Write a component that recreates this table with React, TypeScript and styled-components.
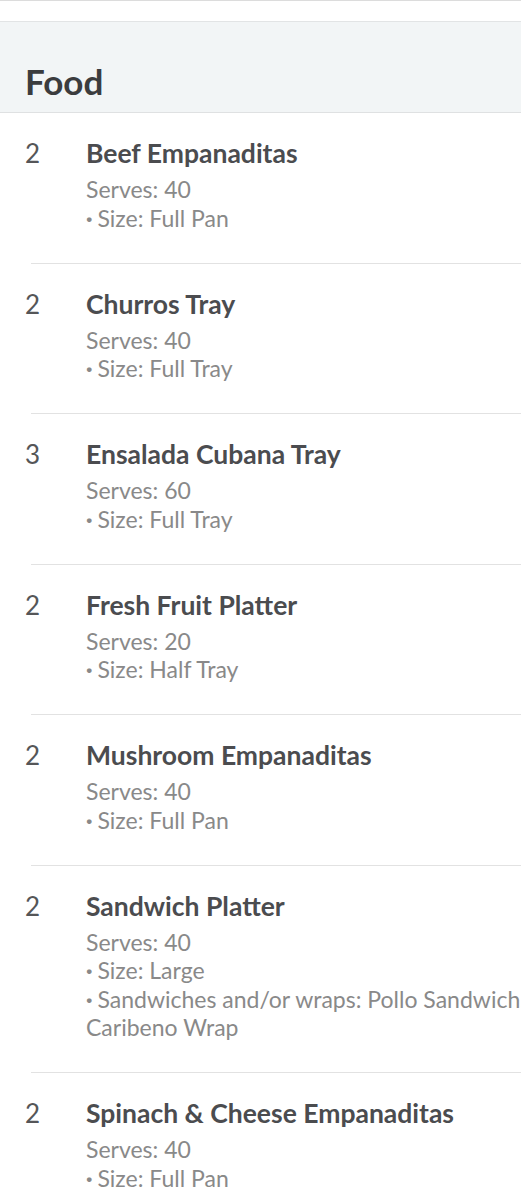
import styled, { createGlobalStyle } from 'styled-components';

const GlobalStyle = createGlobalStyle`
  html, body {
    margin: 0;
    padding: 0;
    background: #ffffff;
    overflow-x: hidden;
  }

  body {
    font-family: Lato, "Open Sans", Arial, sans-serif;
  }
`;

const Page = styled.main`
  width: 640px;
  border-top: 1px solid #dcdcdc;
  padding-top: 20px;
`;

const SectionHeader = styled.header`
  height: 92px;
  box-sizing: border-box;
  background: #f2f5f6;
  border-top: 1px solid #e2e4e5;
  border-bottom: 1px solid #dfe1e2;
  display: flex;
  align-items: flex-end;
  padding: 0 0 9px 25px;

  h2 {
    margin: 0;
    font-size: 35px;
    line-height: 44px;
    font-weight: 700;
    color: #3b3c3e;
  }
`;

const List = styled.ul`
  list-style: none;
  margin: 0;
  padding: 0;
`;

const Item = styled.li`
  display: flex;
  padding-left: 25px;
`;

const Qty = styled.span`
  width: 61px;
  flex-shrink: 0;
  padding-top: 24px;
  font-size: 26px;
  line-height: 32px;
  color: #555658;
`;

const Body = styled.div<{ $last?: boolean }>`
  flex: 1;
  margin-left: -55px;
  padding: 24px 0 30.5px 55px;
  border-bottom: ${(p) => (p.$last ? 'none' : '1px solid #e2e2e2')};
`;

const Title = styled.h3`
  margin: 0 0 6px;
  font-size: 26.5px;
  line-height: 32px;
  font-weight: 700;
  color: #4b4c4f;
`;

const Detail = styled.p`
  margin: 0;
  font-size: 23px;
  line-height: 28.5px;
  color: #898989;
  white-space: nowrap;
`;

const Bullet = styled.span`
  font-weight: 900;
  margin-right: 5px;
`;

type Food = {
  qty: number;
  name: string;
  serves: number;
  options: string[];
};

const foods: Food[] = [
  { qty: 2, name: 'Beef Empanaditas', serves: 40, options: ['Size: Full Pan'] },
  { qty: 2, name: 'Churros Tray', serves: 40, options: ['Size: Full Tray'] },
  { qty: 3, name: 'Ensalada Cubana Tray', serves: 60, options: ['Size: Full Tray'] },
  { qty: 2, name: 'Fresh Fruit Platter', serves: 20, options: ['Size: Half Tray'] },
  { qty: 2, name: 'Mushroom Empanaditas', serves: 40, options: ['Size: Full Pan'] },
  {
    qty: 2,
    name: 'Sandwich Platter',
    serves: 40,
    options: ['Size: Large', 'Sandwiches and/or wraps: Pollo Sandwich,\nCaribeno Wrap'],
  },
  { qty: 2, name: 'Spinach & Cheese Empanaditas', serves: 40, options: ['Size: Full Pan'] },
];

const App = () => {
  return (
    <>
      <GlobalStyle />
      <Page>
        <SectionHeader>
          <h2>Food</h2>
        </SectionHeader>
        <List>
          {foods.map((f, i) => (
            <Item key={f.name}>
              <Qty>{f.qty}</Qty>
              <Body $last={i === foods.length - 1}>
                <Title>{f.name}</Title>
                <Detail>Serves: {f.serves}</Detail>
                {f.options.map((o) =>
                  o.split('\n').map((line, j) => (
                    <Detail key={o + j}>
                      {j === 0 && <Bullet>·</Bullet>}
                      {line}
                    </Detail>
                  ))
                )}
              </Body>
            </Item>
          ))}
        </List>
      </Page>
    </>
  );
};

export default App;
